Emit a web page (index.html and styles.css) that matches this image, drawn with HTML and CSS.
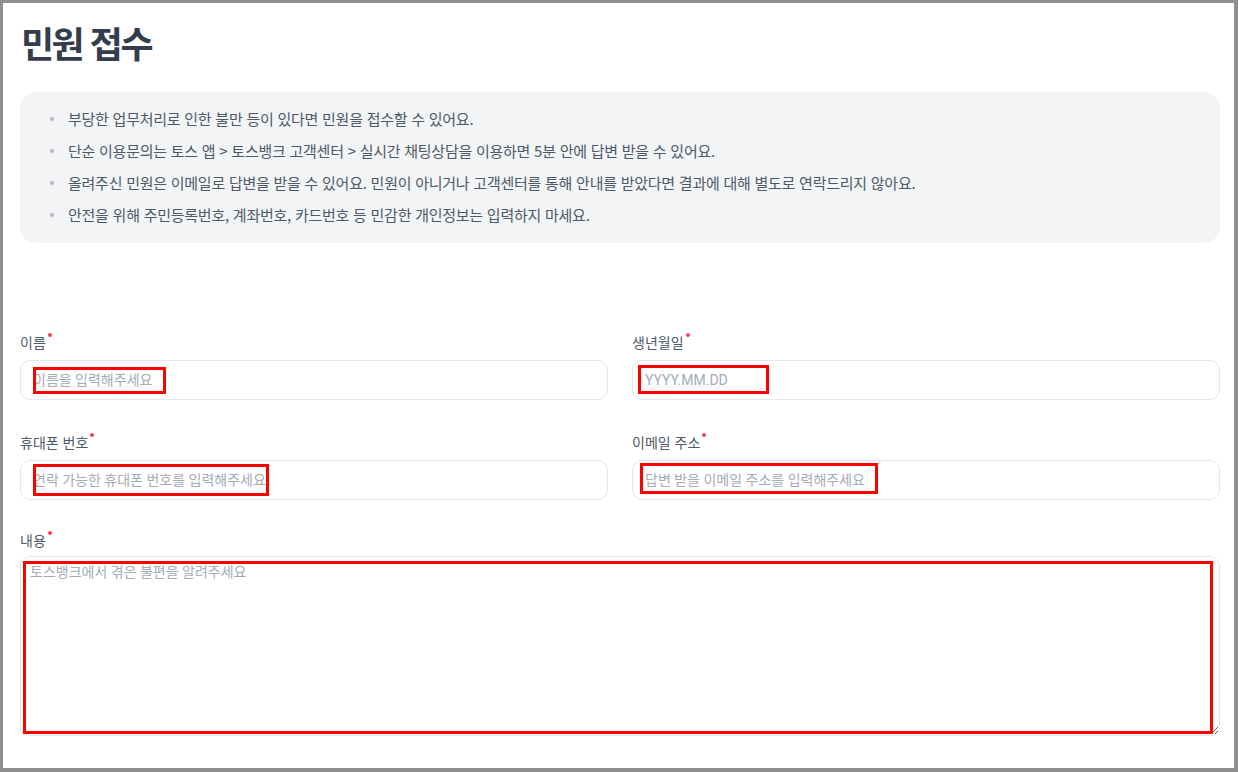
FILE: index.html
```html
<!DOCTYPE html>
<html lang="ko">
<head>
<meta charset="utf-8">
<title>민원 접수</title>
<link rel="stylesheet" href="styles.css">
</head>
<body>
<div class="page">
  <h1 class="title">민원 접수</h1>

  <ul class="notice">
    <li>부당한 업무처리로 인한 불만 등이 있다면 민원을 접수할 수 있어요.</li>
    <li>단순 이용문의는 토스 앱 &gt; 토스뱅크 고객센터 &gt; 실시간 채팅상담을 이용하면 5분 안에 답변 받을 수 있어요.</li>
    <li>올려주신 민원은 이메일로 답변을 받을 수 있어요. 민원이 아니거나 고객센터를 통해 안내를 받았다면 결과에 대해 별도로 연락드리지 않아요.</li>
    <li>안전을 위해 주민등록번호, 계좌번호, 카드번호 등 민감한 개인정보는 입력하지 마세요.</li>
  </ul>

  <form class="form">
    <div class="grid">
      <div class="field">
        <label class="label">이름<span class="req"></span></label>
        <div class="control">
          <input class="input" type="text" placeholder="이름을 입력해주세요">
          <div class="mark mark-name"></div>
        </div>
      </div>
      <div class="field">
        <label class="label">생년월일<span class="req"></span></label>
        <div class="control">
          <input class="input" type="text" placeholder="YYYY.MM.DD">
          <div class="mark mark-birth"></div>
        </div>
      </div>
      <div class="field">
        <label class="label">휴대폰 번호<span class="req"></span></label>
        <div class="control">
          <input class="input" type="text" placeholder="연락 가능한 휴대폰 번호를 입력해주세요">
          <div class="mark mark-phone"></div>
        </div>
      </div>
      <div class="field">
        <label class="label">이메일 주소<span class="req"></span></label>
        <div class="control">
          <input class="input" type="text" placeholder="답변 받을 이메일 주소를 입력해주세요">
          <div class="mark mark-email"></div>
        </div>
      </div>
    </div>

    <div class="field field-wide">
      <label class="label">내용<span class="req"></span></label>
      <div class="control">
        <textarea class="textarea" placeholder="토스뱅크에서 겪은 불편을 알려주세요"></textarea>
        <div class="mark mark-content"></div>
      </div>
    </div>
  </form>
</div>
</body>
</html>
```

FILE: styles.css
```css
html, body {
  margin: 0;
  padding: 0;
  height: 772px;
  overflow: hidden;
  background: #8f8f8f;
}

body {
  font-family: "Noto Sans CJK KR", "Noto Sans", sans-serif;
}

.page {
  box-sizing: border-box;
  margin: 3px 4px 0 3px;
  height: 765px;
  background: #ffffff;
  padding: 15px 14px 0 17px;
  overflow: hidden;
}

.title {
  margin: 0;
  font-size: 36px;
  line-height: 48px;
  font-weight: 700;
  letter-spacing: -2.5px;
  color: #333d4b;
  padding-left: 1px;
}

.notice {
  list-style: none;
  margin: 26px 0 0 0;
  padding: 11px 20px 12px 30px;
  background: #f2f4f6;
  border-radius: 16px;
}

.notice li {
  display: flex;
  align-items: center;
  gap: 14px;
  font-size: 15px;
  line-height: 32px;
  color: #4e5968;
  letter-spacing: -0.25px;
}

.notice li::before {
  content: "";
  flex: none;
  width: 4px;
  height: 4px;
  border-radius: 50%;
  background: #b0b8c1;
}

.form {
  margin-top: 89px;
}

.grid {
  display: grid;
  grid-template-columns: 1fr 1fr;
  column-gap: 24px;
  row-gap: 32px;
}

.field {
  display: flex;
  flex-direction: column;
  gap: 8px;
}

.field-wide {
  margin-top: 30px;
  gap: 6px;
}

.label {
  font-size: 14px;
  line-height: 20px;
  color: #4e5968;
}

.req {
  display: inline-block;
  vertical-align: top;
  width: 4px;
  height: 4px;
  margin: 1px 0 0 2px;
  border-radius: 50%;
  background: #f04452;
}

.control {
  position: relative;
}

.input,
.textarea {
  display: block;
  box-sizing: border-box;
  width: 100%;
  border: 1px solid #e5e8eb;
  border-radius: 10px;
  background: #ffffff;
  font-family: Roboto, "Noto Sans CJK KR", "Noto Sans", sans-serif;
  font-size: 14px;
  color: #333d4b;
  outline: none;
  margin: 0;
}

.input {
  height: 40px;
  padding: 0 12px;
}

.textarea {
  height: 180px;
  padding: 5px 9px;
  line-height: 20px;
}

.input::placeholder,
.textarea::placeholder {
  color: #a3acb6;
}

.mark {
  position: absolute;
  box-sizing: border-box;
  border: 3px solid #ff0000;
  pointer-events: none;
}

.mark-name { left: 13px; top: 7px; width: 133px; height: 27px; }
.mark-birth { left: 6px; top: 5px; width: 131px; height: 29px; }
.mark-phone { left: 13px; top: 4px; width: 236px; height: 32px; }
.mark-email { left: 8px; top: 3px; width: 238px; height: 31px; }
.mark-content { left: 3px; top: 5px; width: 1190px; height: 173px; }
```
